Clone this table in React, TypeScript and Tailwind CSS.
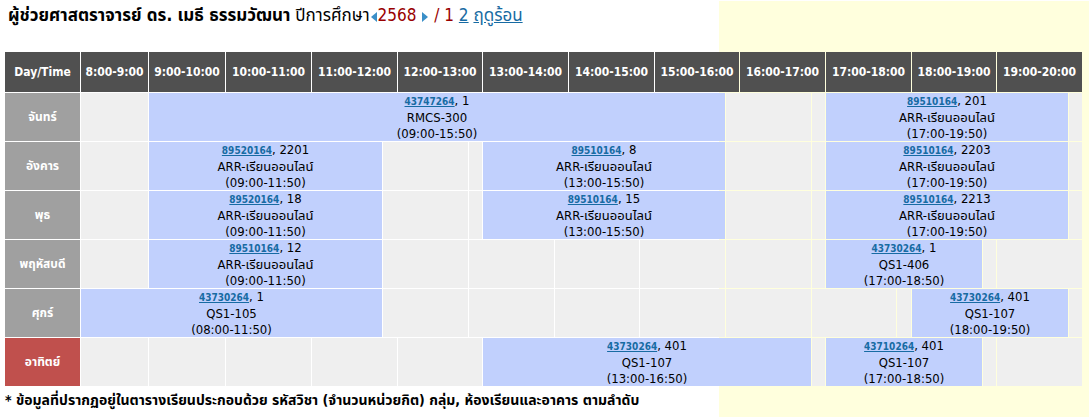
import React from "react";

// ─── Data ─────────────────────────────────────────────────────────────────────

type Cell =
  | { kind: "empty"; span: string }
  | { kind: "course"; span: string; code: string; group: string; room: string; time: string };

type Row = { day: string; sunday?: boolean; cells: Cell[] };

const HOURS: { label: string; span: string }[] = [
  { label: "8:00-9:00", span: "col-span-1" },
  { label: "9:00-10:00", span: "col-span-1" },
  { label: "10:00-11:00", span: "col-span-1" },
  { label: "11:00-12:00", span: "col-span-2" },
  { label: "12:00-13:00", span: "col-span-2" },
  { label: "13:00-14:00", span: "col-span-2" },
  { label: "14:00-15:00", span: "col-span-2" },
  { label: "15:00-16:00", span: "col-span-2" },
  { label: "16:00-17:00", span: "col-span-2" },
  { label: "17:00-18:00", span: "col-span-2" },
  { label: "18:00-19:00", span: "col-span-2" },
  { label: "19:00-20:00", span: "col-span-2" },
];

const E = (span: string): Cell => ({ kind: "empty", span });
const C = (span: string, code: string, group: string, room: string, time: string): Cell => ({
  kind: "course",
  span,
  code,
  group,
  room,
  time,
});

const ONLINE = "ARR-เรียนออนไลน์";

const ROWS: Row[] = [
  {
    day: "จันทร์",
    cells: [
      E("col-span-1"),
      C("col-span-11", "43747264", "1", "RMCS-300", "(09:00-15:50)"),
      E("col-span-2"),
      E("col-span-1"),
      C("col-span-5", "89510164", "201", ONLINE, "(17:00-19:50)"),
      E("col-span-1"),
    ],
  },
  {
    day: "อังคาร",
    cells: [
      E("col-span-1"),
      C("col-span-3", "89520164", "2201", ONLINE, "(09:00-11:50)"),
      E("col-span-2"),
      E("col-span-1"),
      C("col-span-5", "89510164", "8", ONLINE, "(13:00-15:50)"),
      E("col-span-2"),
      E("col-span-1"),
      C("col-span-5", "89510164", "2203", ONLINE, "(17:00-19:50)"),
      E("col-span-1"),
    ],
  },
  {
    day: "พุธ",
    cells: [
      E("col-span-1"),
      C("col-span-3", "89520164", "18", ONLINE, "(09:00-11:50)"),
      E("col-span-2"),
      E("col-span-1"),
      C("col-span-5", "89510164", "15", ONLINE, "(13:00-15:50)"),
      E("col-span-2"),
      E("col-span-1"),
      C("col-span-5", "89510164", "2213", ONLINE, "(17:00-19:50)"),
      E("col-span-1"),
    ],
  },
  {
    day: "พฤหัสบดี",
    cells: [
      E("col-span-1"),
      C("col-span-3", "89510164", "12", ONLINE, "(09:00-11:50)"),
      E("col-span-2"),
      E("col-span-2"),
      E("col-span-2"),
      E("col-span-2"),
      E("col-span-2"),
      E("col-span-1"),
      C("col-span-3", "43730264", "1", "QS1-406", "(17:00-18:50)"),
      E("col-span-1"),
      E("col-span-2"),
    ],
  },
  {
    day: "ศุกร์",
    cells: [
      C("col-span-4", "43730264", "1", "QS1-105", "(08:00-11:50)"),
      E("col-span-2"),
      E("col-span-2"),
      E("col-span-2"),
      E("col-span-2"),
      E("col-span-2"),
      E("col-span-2"),
      E("col-span-1"),
      C("col-span-3", "43730264", "401", "QS1-107", "(18:00-19:50)"),
      E("col-span-1"),
    ],
  },
  {
    day: "อาทิตย์",
    sunday: true,
    cells: [
      E("col-span-1"),
      E("col-span-1"),
      E("col-span-1"),
      E("col-span-2"),
      E("col-span-2"),
      C("col-span-7", "43730264", "401", "QS1-107", "(13:00-16:50)"),
      E("col-span-1"),
      C("col-span-3", "43710264", "401", "QS1-107", "(17:00-18:50)"),
      E("col-span-1"),
      E("col-span-2"),
    ],
  },
];

// ─── Bits ─────────────────────────────────────────────────────────────────────

const FONT = "font-['DejaVu_Sans_Condensed','DejaVu_Sans','Noto_Sans_Thai',Tahoma,sans-serif]";

function Arrow({ dir }: { dir: "left" | "right" }) {
  return (
    <svg width="6" height="10" viewBox="0 0 6 10" className="inline-block mx-[1px] align-[-1px]">
      {dir === "left" ? (
        <polygon points="6,0 6,10 0,5" fill="#3a8fc8" />
      ) : (
        <polygon points="0,0 0,10 6,5" fill="#3a8fc8" />
      )}
    </svg>
  );
}

function CourseCell({ cell }: { cell: Extract<Cell, { kind: "course" }> }) {
  return (
    <div
      className={`${cell.span} bg-[#c1d0fd] flex flex-col items-center justify-center text-center text-[13px] leading-[16px] text-black`}
    >
      <div>
        <a href="#" className="text-[10px] font-bold underline text-[#176ba3]">
          {cell.code}
        </a>
        , {cell.group}
      </div>
      <div>{cell.room}</div>
      <div>{cell.time}</div>
    </div>
  );
}

// ─── Page ─────────────────────────────────────────────────────────────────────

export default function App() {
  return (
    <div
      className={`${FONT} min-h-screen w-full border-t border-white bg-[linear-gradient(to_right,#ffffff_719px,#ffffdd_719px)]`}
    >
      {/* Title line */}
      <div className="pl-[8px] pt-[3px] h-[51px] text-[17px] leading-[22px] text-black">
        <span className="font-bold">ผู้ช่วยศาสตราจารย์ ดร. เมธี ธรรมวัฒนา</span>{" "}
        <span>ปีการศึกษา</span>
        <Arrow dir="left" />
        <span className="text-[#990000]">2568</span> <Arrow dir="right" />{" "}
        <span className="text-[#990000]">/ 1</span>{" "}
        <a href="#" className="text-[#176ba3] underline">2</a>{" "}
        <a href="#" className="text-[#176ba3] underline">ฤดูร้อน</a>
      </div>

      {/* Timetable */}
      <div className="ml-[5px] grid w-max grid-cols-[75px_67px_76px_85px_70px_14px_70px_13px_71px_13px_70px_14px_70px_13px_71px_13px_70px_14px_70px_13px_71px_13px] auto-rows-[48px] grid-rows-[40px] gap-[1px]">
        <div className="bg-[#505050] text-white font-bold text-[12px] flex items-center justify-center">
          Day/Time
        </div>
        {HOURS.map((h) => (
          <div
            key={h.label}
            className={`${h.span} bg-[#505050] text-white font-bold text-[12px] flex items-center justify-center`}
          >
            {h.label}
          </div>
        ))}

        {ROWS.map((row) => (
          <React.Fragment key={row.day}>
            <div
              className={`${row.sunday ? "bg-[#c0504d]" : "bg-[#a0a0a0]"} text-white font-bold text-[12px] flex items-center justify-center`}
            >
              {row.day}
            </div>
            {row.cells.map((cell, i) =>
              cell.kind === "course" ? (
                <CourseCell key={i} cell={cell} />
              ) : (
                <div key={i} className={`${cell.span} bg-[#efefef]`} />
              )
            )}
          </React.Fragment>
        ))}
      </div>

      {/* Footnote */}
      <div className="pl-[5px] pt-[4px] text-[14px] leading-[20px] font-bold text-black">
        * ข้อมูลที่ปรากฏอยู่ในตารางเรียนประกอบด้วย รหัสวิชา (จำนวนหน่วยกิต) กลุ่ม, ห้องเรียนและอาคาร ตามลำดับ
      </div>
    </div>
  );
}
